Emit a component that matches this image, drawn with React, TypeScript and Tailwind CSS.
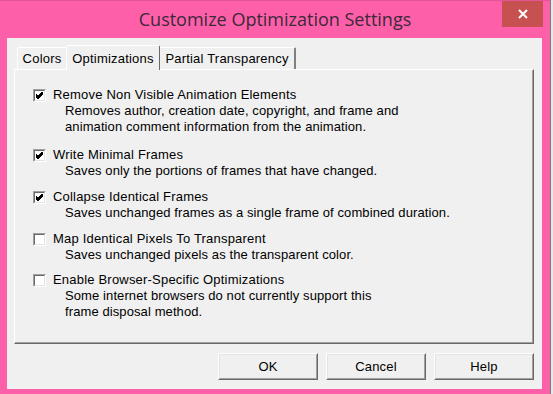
import React from "react";

function Check({ checked }: { checked: boolean }) {
  return (
    <div className="w-[13px] h-[13px] border border-t-[#a0a0a0] border-l-[#a0a0a0] border-r-white border-b-white shrink-0">
      <div className="w-full h-full border border-t-[#696969] border-l-[#696969] border-r-[#e3e3e3] border-b-[#e3e3e3] bg-white flex items-center justify-center">
        {checked && (
          <svg width="7" height="7" viewBox="0 0 7 7">
            <path d="M0 2.5 L2 4.5 L6.5 0 M0 3.5 L2 5.5 L6.5 1 M0 4.5 L2 6.5 L6.5 2" stroke="black" strokeWidth="1" fill="none" shapeRendering="crispEdges" />
          </svg>
        )}
      </div>
    </div>
  );
}

function Option({ checked, label, lines, mt }: { checked: boolean; label: string; lines: string[]; mt: string }) {
  return (
    <div className={`flex flex-col ${mt}`}>
      <div className="flex items-center h-[16px]">
        <div className="w-[20px] flex"><Check checked={checked} /></div>
        <span className="leading-[16px]">{label}</span>
      </div>
      {lines.map((l) => (
        <div key={l} className="pl-[32px] leading-[16px] h-[16px] tracking-[0.1px]">{l}</div>
      ))}
    </div>
  );
}

function Btn({ children }: { children: React.ReactNode }) {
  return (
    <div className="w-[100px] h-[27px] border border-t-white border-l-white border-r-[#696969] border-b-[#696969]">
      <div className="w-full h-full border border-t-[#e3e3e3] border-l-[#e3e3e3] border-r-[#a0a0a0] border-b-[#a0a0a0] bg-[#f0f0f0] flex items-center justify-center">
        {children}
      </div>
    </div>
  );
}

export default function App() {
  return (
    <div className="w-[553px] h-[394px] bg-[#fe5fa9] flex overflow-hidden font-['Liberation_Sans',Arial,sans-serif] text-[13px] tracking-[0.2px] text-black">
      <div className="w-[550px] flex flex-col shrink-0">
        <div className="h-[38px] relative flex items-center justify-center border-t border-[#e45596]">
          <span className="font-['Open_Sans',sans-serif] text-[18px] tracking-[0px] text-[#3a2a3a]">Customize Optimization Settings</span>
          <div className="absolute right-[7px] top-0 w-[41px] h-[26px] bg-[#c75050] flex items-center justify-center">
            <svg width="10" height="10" viewBox="0 0 10 10">
              <path d="M1 1 L9 9 M9 1 L1 9" stroke="white" strokeWidth="2" />
            </svg>
          </div>
        </div>
        <div className="ml-[7px] mr-[8px] h-[351px] bg-[#f0f0f0] pt-[7px] px-[7px] flex flex-col">
          <div className="flex items-end h-[24px] pl-[3px] relative z-10">
            <div className="w-[49px] h-[22px] border-t border-l border-white rounded-tl-[2px] flex items-center justify-center">
              <span className="mt-[1px]">Colors</span>
            </div>
            <div className="w-[94px] h-[25px] -mb-px bg-[#f0f0f0] border-t border-l border-white border-r border-r-[#696969] rounded-t-[2px] flex items-start justify-center pt-[3px]">
              <span>Optimizations</span>
            </div>
            <div className="w-[136px] h-[22px] border-t border-white border-r-2 border-r-[#808080] rounded-tr-[2px] flex items-center justify-center">
              <span className="mt-[1px]">Partial Transparency</span>
            </div>
          </div>
          <div className="w-[520px] h-[275px] border border-t-white border-l-white border-r-[#696969] border-b-[#696969]">
            <div className="w-full h-full border-r border-b border-r-[#a0a0a0] border-b-[#a0a0a0] pt-[17px] pl-[18px] flex flex-col">
              <Option
                checked
                mt="mt-0"
                label="Remove Non Visible Animation Elements"
                lines={["Removes author, creation date, copyright, and frame and", "animation comment information from the animation."]}
              />
              <Option checked mt="mt-[12px]" label="Write Minimal Frames" lines={["Saves only the portions of frames that have changed."]} />
              <Option checked mt="mt-[10px]" label="Collapse Identical Frames" lines={["Saves unchanged frames as a single frame of combined duration."]} />
              <Option checked={false} mt="mt-[10px]" label="Map Identical Pixels To Transparent" lines={["Saves unchanged pixels as the transparent color."]} />
              <Option
                checked={false}
                mt="mt-[9px]"
                label="Enable Browser-Specific Optimizations"
                lines={["Some internet browsers do not currently support this", "frame disposal method."]}
              />
            </div>
          </div>
          <div className="flex justify-end gap-[8px] mt-[9px] pr-px">
            <Btn>OK</Btn>
            <Btn>Cancel</Btn>
            <Btn>Help</Btn>
          </div>
        </div>
      </div>
      <div className="w-[3px] h-full bg-[#e8e8e8] border-l border-[#7a7a7a]" />
    </div>
  );
}
